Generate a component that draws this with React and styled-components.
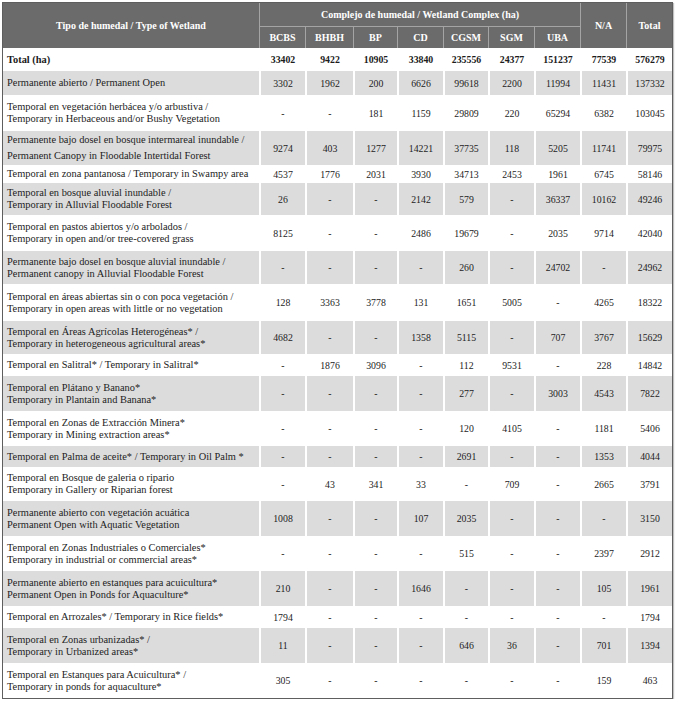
import React from 'react';
import styled, { createGlobalStyle } from 'styled-components';

const GlobalStyle = createGlobalStyle`
  body {
    margin: 0;
    background: #fff;
    font-family: "Liberation Serif", "Times New Roman", serif;
  }
`;

const columns = ['BCBS', 'BHBH', 'BP', 'CD', 'CGSM', 'SGM', 'UBA'];
const widths = [256, 46, 48, 44, 46, 45, 46, 46, 46, 46];

const rows = [
  { label: ['Total (ha)'], bold: true, h: 23, values: ['33402', '9422', '10905', '33840', '235556', '24377', '151237', '77539', '576279'] },
  { label: ['Permanente abierto / Permanent Open'], h: 24, values: ['3302', '1962', '200', '6626', '99618', '2200', '11994', '11431', '137332'] },
  { label: ['Temporal en vegetación herbácea y/o arbustiva /', 'Temporary in Herbaceous and/or Bushy Vegetation'], h: 36, values: ['-', '-', '181', '1159', '29809', '220', '65294', '6382', '103045'] },
  { label: ['Permanente bajo dosel en bosque intermareal inundable /', 'Permanent Canopy in Floodable Intertidal Forest'], h: 34, lh: 16, values: ['9274', '403', '1277', '14221', '37735', '118', '5205', '11741', '79975'] },
  { label: ['Temporal en zona pantanosa / Temporary in Swampy area'], h: 18, values: ['4537', '1776', '2031', '3930', '34713', '2453', '1961', '6745', '58146'] },
  { label: ['Temporal en bosque aluvial inundable /', 'Temporary in Alluvial Floodable Forest'], h: 32, values: ['26', '-', '-', '2142', '579', '-', '36337', '10162', '49246'] },
  { label: ['Temporal en pastos abiertos y/o arbolados /', 'Temporary in open and/or tree-covered grass'], h: 36, values: ['8125', '-', '-', '2486', '19679', '-', '2035', '9714', '42040'] },
  { label: ['Permanente bajo dosel en bosque aluvial inundable /', 'Permanent canopy in Alluvial Floodable Forest'], h: 33, values: ['-', '-', '-', '-', '260', '-', '24702', '-', '24962'] },
  { label: ['Temporal en áreas abiertas sin o con poca vegetación /', 'Temporary in open areas with little or no vegetation'], h: 37, values: ['128', '3363', '3778', '131', '1651', '5005', '-', '4265', '18322'] },
  { label: ['Temporal en Áreas Agrícolas Heterogéneas* /', 'Temporary in heterogeneous agricultural areas*'], h: 33, values: ['4682', '-', '-', '1358', '5115', '-', '707', '3767', '15629'] },
  { label: ['Temporal en Salitral* / Temporary in Salitral*'], h: 22, values: ['-', '1876', '3096', '-', '112', '9531', '-', '228', '14842'] },
  { label: ['Temporal en Plátano y Banano*', 'Temporary in Plantain and Banana*'], h: 35, values: ['-', '-', '-', '-', '277', '-', '3003', '4543', '7822'] },
  { label: ['Temporal en Zonas de Extracción Minera*', 'Temporary in Mining extraction areas*'], h: 35, values: ['-', '-', '-', '-', '120', '4105', '-', '1181', '5406'] },
  { label: ['Temporal en Palma de aceite* / Temporary in Oil Palm *'], h: 21, values: ['-', '-', '-', '-', '2691', '-', '-', '1353', '4044'] },
  { label: ['Temporal en Bosque de galeria o ripario', 'Temporary in Gallery or Riparian forest'], h: 34, values: ['-', '43', '341', '33', '-', '709', '-', '2665', '3791'] },
  { label: ['Permanente abierto con vegetación acuática', 'Permanent Open with Aquatic Vegetation'], h: 35, values: ['1008', '-', '-', '107', '2035', '-', '-', '-', '3150'] },
  { label: ['Temporal en Zonas Industriales o Comerciales*', 'Temporary in industrial or commercial areas*'], h: 35, values: ['-', '-', '-', '-', '515', '-', '-', '2397', '2912'] },
  { label: ['Permanente abierto en estanques para acuicultura*', 'Permanent Open in Ponds for Aquaculture*'], h: 35, values: ['210', '-', '-', '1646', '-', '-', '-', '105', '1961'] },
  { label: ['Temporal en Arrozales* / Temporary in Rice fields*'], h: 22, values: ['1794', '-', '-', '-', '-', '-', '-', '-', '1794'] },
  { label: ['Temporal en Zonas urbanizadas* /', 'Temporary in Urbanized areas*'], h: 35, values: ['11', '-', '-', '-', '646', '36', '-', '701', '1394'] },
  { label: ['Temporal en Estanques para Acuicultura* /', 'Temporary in ponds for aquaculture*'], h: 35, values: ['305', '-', '-', '-', '-', '-', '-', '159', '463'] },
];

const App = () => {
  return (
    <Page>
      <GlobalStyle />
      <Table>
        <colgroup>
          {widths.map((w, i) => (
            <col key={i} style={{ width: w }} />
          ))}
        </colgroup>
        <thead>
          <HeadRow h={23}>
            <HeadCell rowSpan={2} first>
              Tipo de humedal / Type of Wetland
            </HeadCell>
            <HeadCell colSpan={7}>Complejo de humedal / Wetland Complex (ha)</HeadCell>
            <HeadCell rowSpan={2}>N/A</HeadCell>
            <HeadCell rowSpan={2}>Total</HeadCell>
          </HeadRow>
          <HeadRow h={22}>
            {columns.map(c => (
              <HeadCell key={c} sub>
                {c}
              </HeadCell>
            ))}
          </HeadRow>
        </thead>
        <tbody>
          {rows.map((row, index) => (
            <Row key={index} h={row.h} shade={index % 2 === 1 ? 1 : 0}>
              <Label bold={row.bold ? 1 : 0} lh={row.lh}>
                {row.label.map((line, i) => (
                  <React.Fragment key={i}>
                    {i > 0 && <br />}
                    {line}
                  </React.Fragment>
                ))}
              </Label>
              {row.values.map((v, i) => (
                <Num key={i} bold={row.bold ? 1 : 0}>
                  {v}
                </Num>
              ))}
            </Row>
          ))}
        </tbody>
      </Table>
    </Page>
  );
};

export default App;

const Page = styled.div`
  padding: 2px 0 0 2px;
`;

const Table = styled.table`
  width: 671px;
  table-layout: fixed;
  border-collapse: separate;
  border-spacing: 0;
  border: 1px solid #5e5e5e;
  box-shadow: 1px 1px 1px #c2c2c2;
  color: #1c1c1c;
  font-family: "Liberation Serif", "Times New Roman", serif;
`;

const HeadRow = styled.tr`
  height: ${props => props.h}px;
`;

const HeadCell = styled.th`
  background: #6b6b6b;
  color: #fff;
  font-weight: bold;
  font-size: 10px;
  text-align: center;
  vertical-align: middle;
  padding: 0;
  white-space: nowrap;
  border-left: ${props => (props.first ? 'none' : '1px solid #a4a4a4')};
  border-top: ${props => (props.sub ? '1px solid #a4a4a4' : 'none')};
`;

const Row = styled.tr`
  height: ${props => props.h}px;
  background: ${props => (props.shade ? '#dcdcdc' : '#fff')};
`;

const Label = styled.td`
  padding: 0 4px;
  font-size: 10.4px;
  line-height: ${props => props.lh || 12}px;
  font-weight: ${props => (props.bold ? 'bold' : 'normal')};
  text-align: left;
  vertical-align: middle;
  white-space: nowrap;
  overflow: hidden;
`;

const Num = styled.td`
  padding: 0;
  font-size: 9.8px;
  font-weight: ${props => (props.bold ? 'bold' : 'normal')};
  text-align: center;
  vertical-align: middle;
  border-left: 2px solid #fff;
  white-space: nowrap;
`;
